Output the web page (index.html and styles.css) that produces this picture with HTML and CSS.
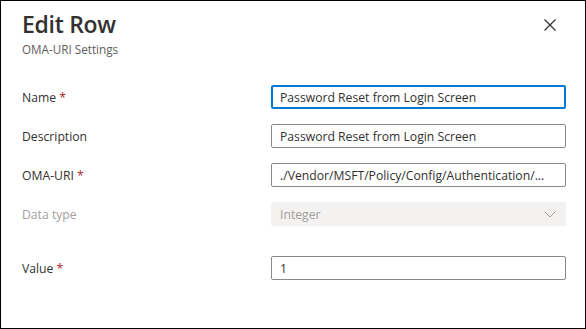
FILE: index.html
```html
<!DOCTYPE html>
<html lang="en">

<head>
    <meta charset="utf-8">
    <title>Edit Row</title>
    <link rel="stylesheet" href="styles.css">
</head>

<body>
    <div class="panel">
        <header class="head">
            <div>
                <h1>Edit Row</h1>
                <p class="sub">OMA-URI Settings</p>
            </div>
            <button class="close" aria-label="Close">
                <svg width="12" height="12" viewBox="0 0 12 12">
                    <path d="M0.5 0.5 L11.5 11.5 M11.5 0.5 L0.5 11.5" stroke="#323130" stroke-width="1.2" fill="none" />
                </svg>
            </button>
        </header>

        <form class="form">
            <div class="row">
                <label>Name <span class="req">*</span></label>
                <input type="text" class="field focus" value="Password Reset from Login Screen">
            </div>
            <div class="row">
                <label>Description</label>
                <input type="text" class="field" value="Password Reset from Login Screen">
            </div>
            <div class="row">
                <label>OMA-URI <span class="req">*</span></label>
                <input type="text" class="field" value="./Vendor/MSFT/Policy/Config/Authentication/...">
            </div>
            <div class="row">
                <label class="off">Data type</label>
                <div class="select">
                    <span>Integer</span>
                    <svg width="12" height="7" viewBox="0 0 12 7">
                        <path d="M0.5 0.5 L6 6 L11.5 0.5" stroke="#a19f9d" stroke-width="1" fill="none" />
                    </svg>
                </div>
            </div>
            <div class="row value">
                <label>Value <span class="req">*</span></label>
                <input type="text" class="field" value="1">
            </div>
        </form>
    </div>
</body>

</html>
```

FILE: styles.css
```css
* {
    box-sizing: border-box;
}

body {
    margin: 0;
    padding: 0;
    background-color: white;
    font-family: 'Open Sans', 'Noto Sans', sans-serif;
}

.panel {
    width: 586px;
    height: 329px;
    border: 1px solid black;
    background-color: white;
}

.head {
    display: flex;
    justify-content: space-between;
    align-items: flex-start;
    padding: 7px 29px 0 21px;
}

h1 {
    margin: 0;
    font-size: 23px;
    font-weight: 600;
    color: #323130;
    line-height: 32px;
    letter-spacing: -0.3px;
}

.sub {
    margin: 1px 0 0 0;
    font-size: 11.7px;
    color: #605e5c;
    line-height: 16px;
}

.close {
    margin-top: 11px;
    padding: 0;
    border: none;
    background: none;
    width: 12px;
    height: 12px;
}

.close svg {
    display: block;
}

.form {
    margin-top: 28px;
    padding-left: 21px;
}

.row {
    display: grid;
    grid-template-columns: 249px 295px;
    align-items: center;
    margin-bottom: 15px;
}

.row.value {
    margin-top: 30px;
}

label {
    font-size: 12.2px;
    color: #323130;
}

label.off {
    color: #a19f9d;
}

.req {
    color: #a4262c;
}

.field {
    height: 24px;
    width: 295px;
    margin: 0;
    padding: 0 8px;
    border: 1px solid #8a8886;
    border-radius: 2px;
    font-family: 'Open Sans', 'Noto Sans', sans-serif;
    font-size: 12.2px;
    color: #323130;
    outline: none;
}

.field.focus {
    border: 2px solid #0078d4;
    padding: 0 7px;
}

.select {
    display: flex;
    justify-content: space-between;
    align-items: center;
    height: 24px;
    padding: 0 10px 0 9px;
    background-color: #f3f2f1;
    border-radius: 2px;
    font-size: 12.2px;
    color: #a19f9d;
}
```
